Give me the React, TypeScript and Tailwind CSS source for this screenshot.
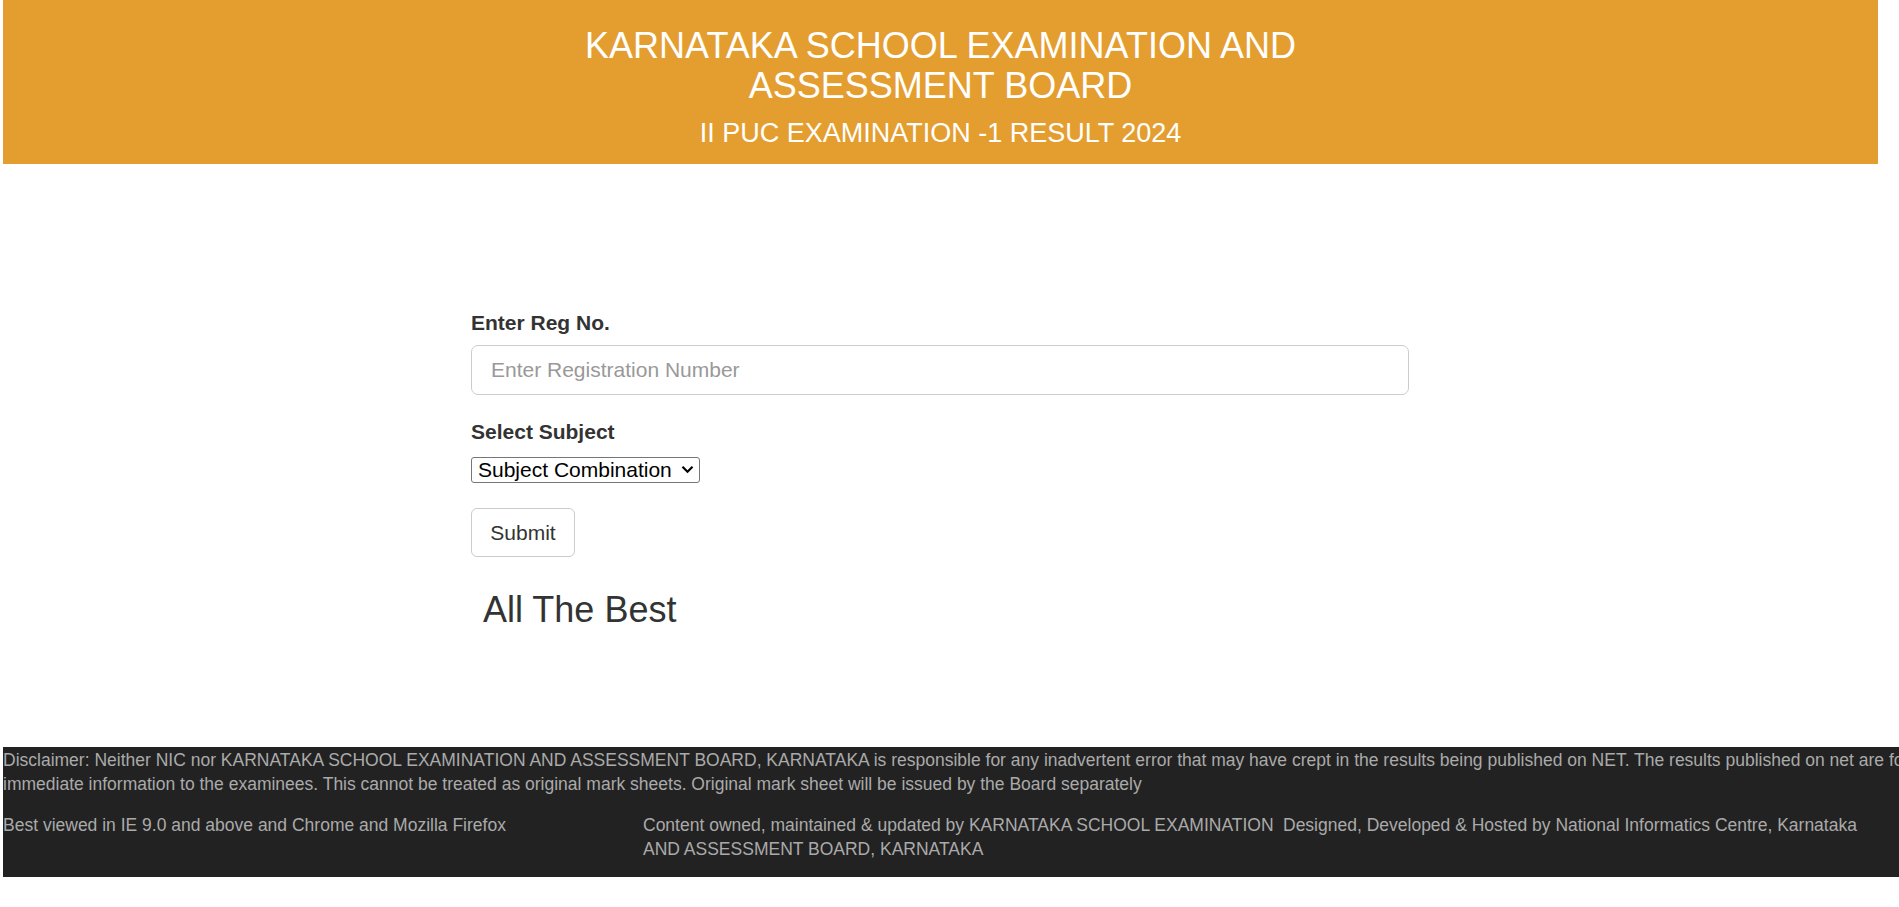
import React from "react";

export default function App() {
  return (
    <div
      className="w-[1899px] min-h-[907px] overflow-hidden bg-white"
      style={{ fontFamily: '"Liberation Sans", Arial, sans-serif' }}
    >
      <div className="pl-[3px]">
        <header className="w-[1875px] h-[164px] bg-[#e49e2f] text-white flex flex-col items-center pt-[26px]">
          <h1 className="w-[780px] text-center text-[36px] leading-[40px] font-normal">
            KARNATAKA SCHOOL EXAMINATION AND ASSESSMENT BOARD
          </h1>
          <h2 className="mt-[11px] text-center text-[27px] leading-[32px] font-normal">
            II PUC EXAMINATION -1 RESULT 2024
          </h2>
        </header>

        <main className="w-[938px] ml-[468px] pt-[145px] text-[#333333]">
          <label className="block text-[21px] leading-[28px] font-bold mb-[8px]">Enter Reg No.</label>
          <input
            type="text"
            placeholder="Enter Registration Number"
            className="block w-[938px] h-[50px] border border-[#cccccc] rounded-[7px] px-[19px] text-[21px] text-[#555] placeholder:text-[#999999] outline-none"
          />
          <label className="block mt-[23px] text-[21px] leading-[28px] font-bold mb-[11px]">Select Subject</label>
          <div className="relative w-[229px] h-[26px]">
            <select className="block appearance-none w-[229px] h-[26px] border border-[#767676] rounded-[3px] text-[21px] leading-[24px] text-black bg-white pl-[6px] pr-[22px]">
              <option>Subject Combination</option>
            </select>
            <svg
              className="absolute right-[6px] top-[8px] pointer-events-none"
              width="13"
              height="9"
              viewBox="0 0 13 9"
              fill="none"
            >
              <path d="M1.5 1.8 L6.5 6.8 L11.5 1.8" stroke="#000" strokeWidth="2.2" />
            </svg>
          </div>
          <button className="block mt-[25px] w-[104px] h-[49px] border border-[#cccccc] rounded-[6px] bg-white text-[21px] text-[#333333]">
            Submit
          </button>
          <div className="mt-[33px] ml-[12px] text-[36px] leading-[40px] text-[#333333]">All The Best</div>
        </main>

        <footer className="mt-[117px] w-[1920px] h-[130px] bg-[#222222] text-[#aaaaaa] text-[17.5px] leading-[24px] pt-[1px]">
          <p>
            Disclaimer: Neither NIC nor KARNATAKA SCHOOL EXAMINATION AND ASSESSMENT BOARD, KARNATAKA is responsible for any inadvertent error that may have crept in the results being published on NET. The results published on net are for immediate information to the examinees. This cannot be treated as original mark sheets. Original mark sheet will be issued by the Board separately
          </p>
          <div className="grid grid-cols-3 mt-[17px]">
            <div>Best viewed in IE 9.0 and above and Chrome and Mozilla Firefox</div>
            <div>Content owned, maintained &amp; updated by KARNATAKA SCHOOL EXAMINATION AND ASSESSMENT BOARD, KARNATAKA</div>
            <div>Designed, Developed &amp; Hosted by National Informatics Centre, Karnataka</div>
          </div>
        </footer>
      </div>
    </div>
  );
}
